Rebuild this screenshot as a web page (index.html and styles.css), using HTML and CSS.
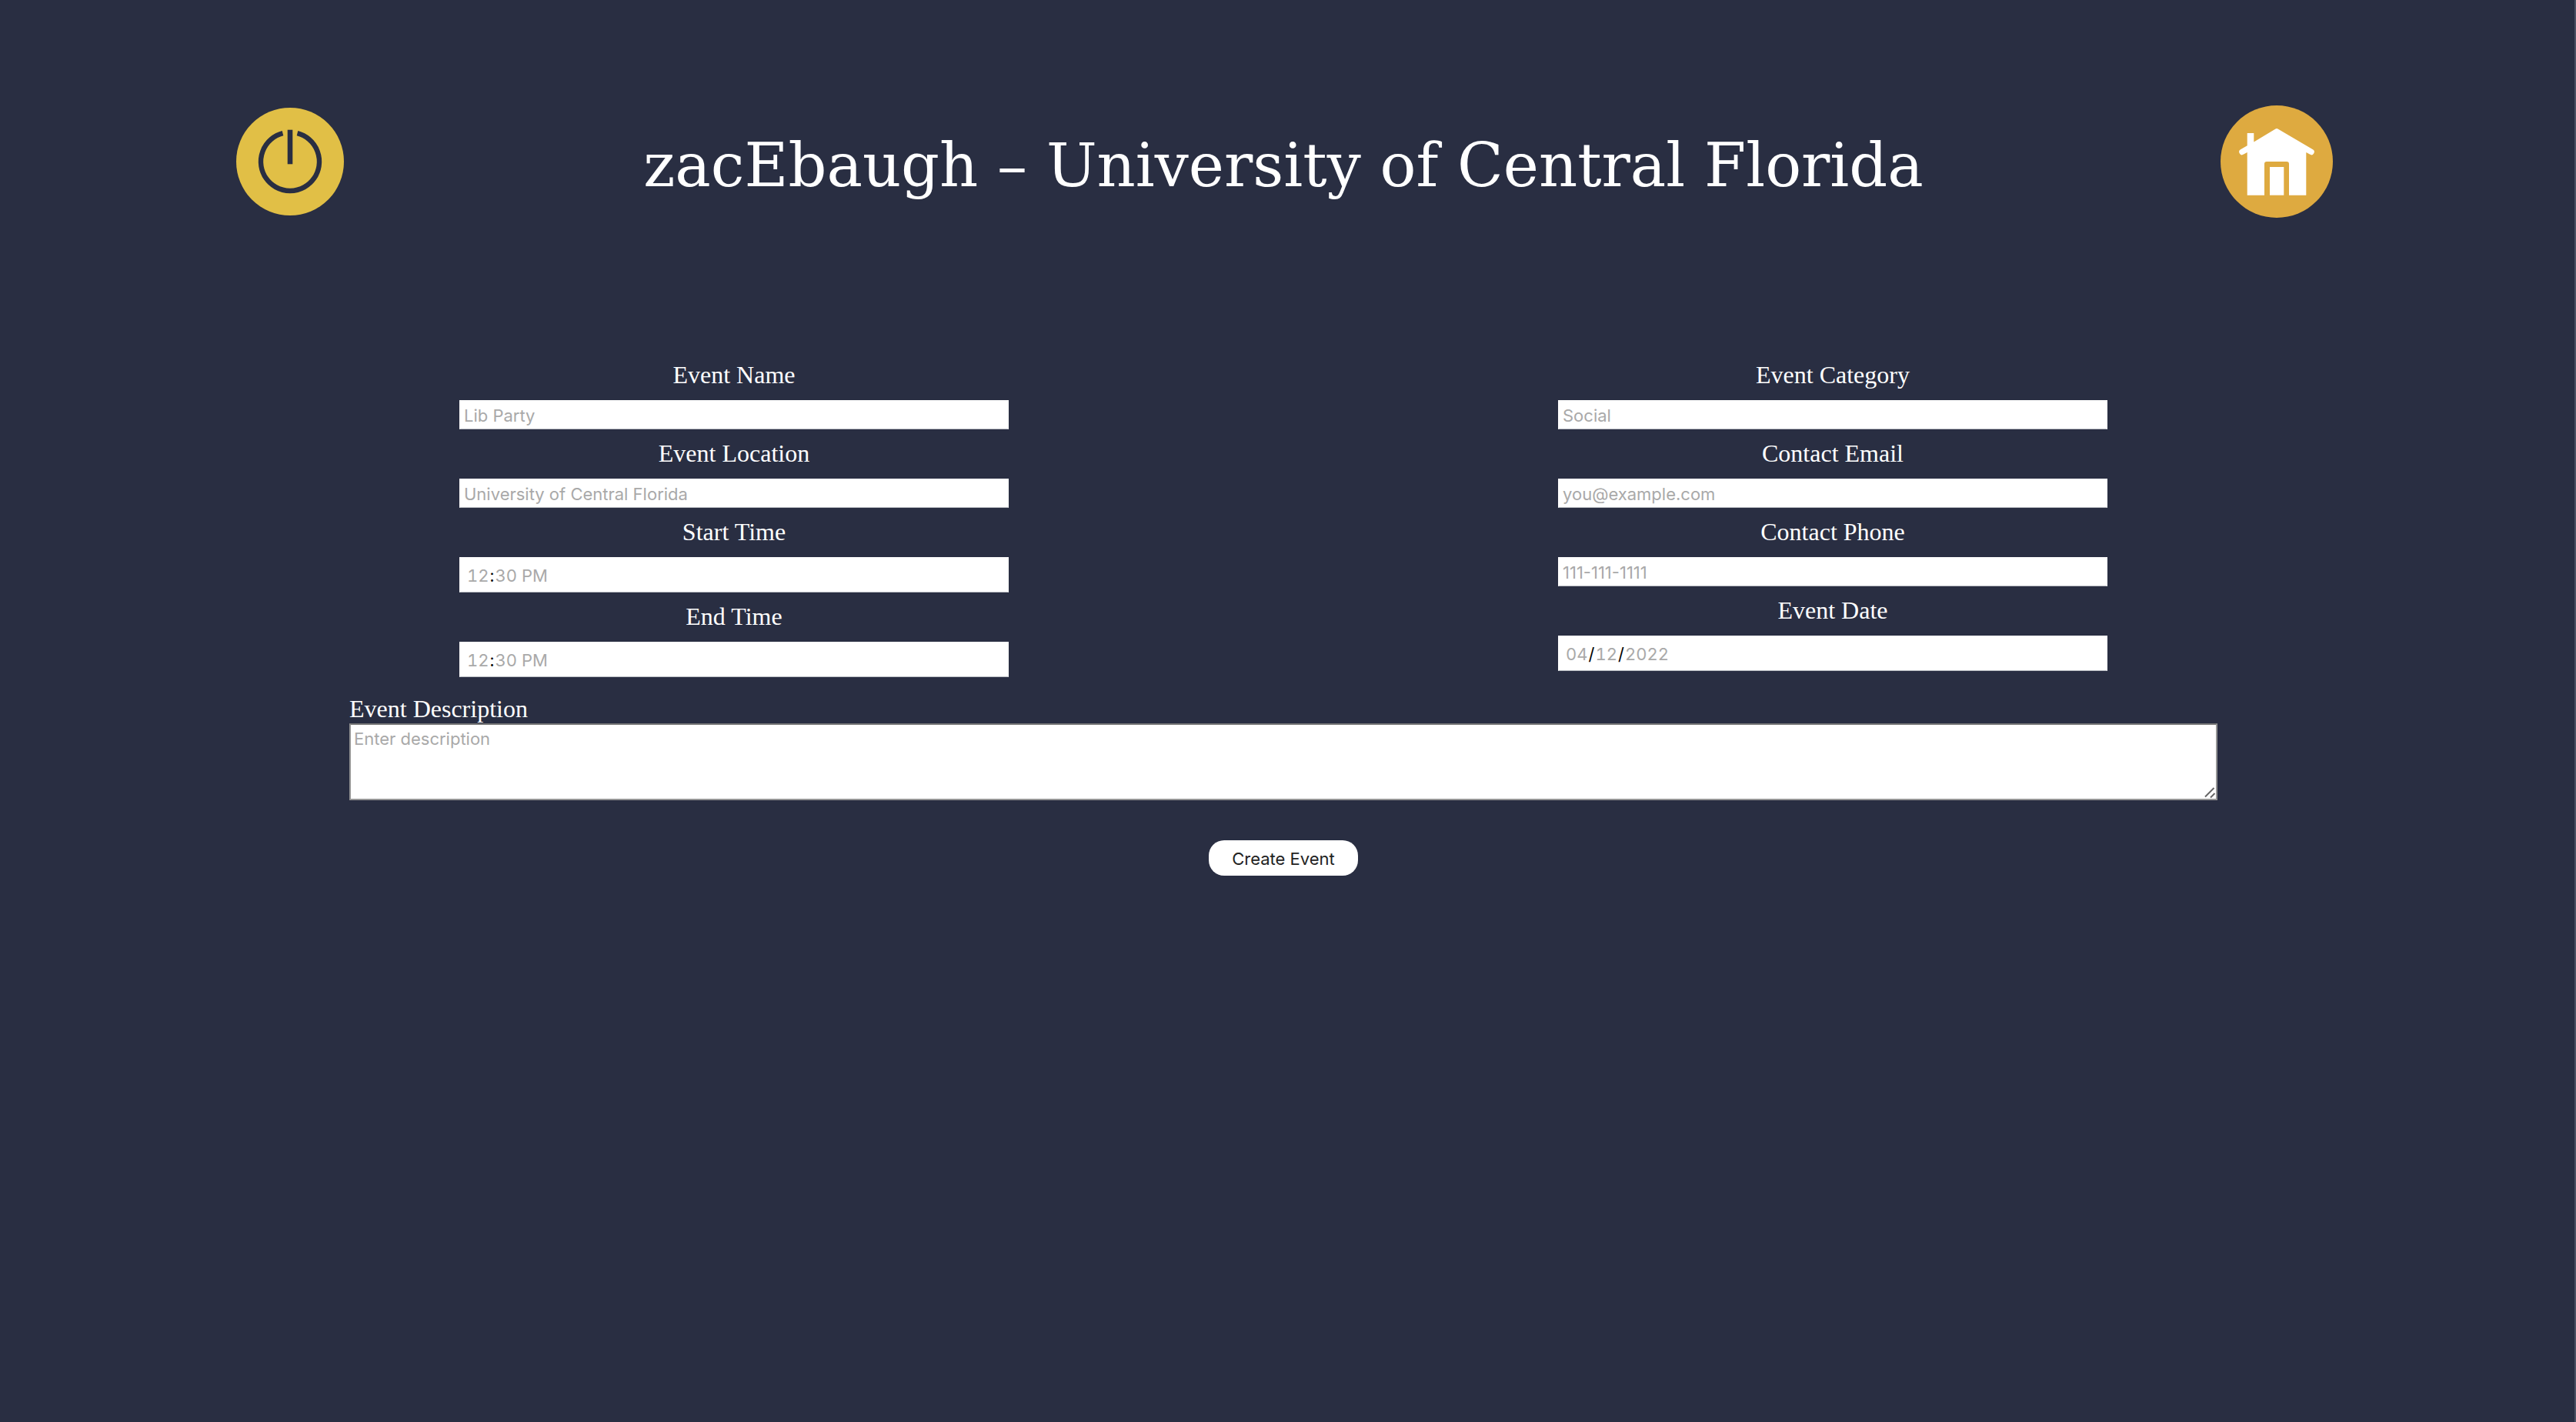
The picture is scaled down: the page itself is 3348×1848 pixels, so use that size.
FILE: index.html
```html
<!DOCTYPE html>
<html lang="en-US">
<head>
  <meta charset="utf-8">
  <title>Create Event</title>
  <link rel="stylesheet" href="styles.css">
</head>
<body>
  <header class="header">
    <button class="icon-button" type="button" aria-label="Log out">
      <svg class="icon" viewBox="0 0 146 146" aria-hidden="true">
        <circle cx="73" cy="73" r="70" fill="#e1bf46"/>
        <path d="M63.5 36.2A38 38 0 1 0 82.5 36.2" fill="none" stroke="#292e42" stroke-width="6.4"/>
        <path d="M73 31.7V76.3" stroke="#292e42" stroke-width="6.6"/>
      </svg>
    </button>
    <h1 class="title">zacEbaugh – University of Central Florida</h1>
    <a class="icon-button" href="#" aria-label="Home">
      <svg class="icon" viewBox="0 0 146 146" aria-hidden="true">
        <circle cx="73" cy="73" r="73" fill="#deaa40"/>
        <path d="M34.7 36h8.6v11.5L71.5 30.4q1.5-.9 3 0L120 57.3a3.7 3.7 0 0 1-4 6.3l-4.7-2.7v55.8H89V76a3 3 0 0 0-3-3H60a3 3 0 0 0-3 3v40.7H34.7V60.9L30 63.6a3.7 3.7 0 0 1-4-6.3l8.7-5z" fill="#fff"/>
        <path d="M64 80h18.3v36.7H64z" fill="#fff"/>
      </svg>
    </a>
  </header>
  <form class="form">
    <div class="columns">
      <div class="column">
        <label class="label" for="name">Event Name</label>
        <input class="field" id="name" type="text" placeholder="Lib Party">
        <label class="label" for="location">Event Location</label>
        <input class="field" id="location" type="text" placeholder="University of Central Florida">
        <label class="label" for="start">Start Time</label>
        <input class="field field-picker" id="start" type="time" value="12:30">
        <label class="label" for="end">End Time</label>
        <input class="field field-picker" id="end" type="time" value="12:30">
      </div>
      <div class="column">
        <label class="label" for="category">Event Category</label>
        <input class="field" id="category" type="text" placeholder="Social">
        <label class="label" for="email">Contact Email</label>
        <input class="field" id="email" type="email" placeholder="you@example.com">
        <label class="label" for="phone">Contact Phone</label>
        <input class="field" id="phone" type="tel" placeholder="111-111-1111">
        <label class="label" for="date">Event Date</label>
        <input class="field field-picker" id="date" type="date" value="2022-04-12">
      </div>
    </div>
    <div class="description">
      <label class="label" for="description">Event Description</label>
      <textarea class="textarea" id="description" placeholder="Enter description"></textarea>
    </div>
    <button class="submit" type="submit">Create Event</button>
  </form>
</body>
</html>
```
FILE: styles.css
```css
* {
  box-sizing: border-box;
}

body {
  min-height: 100vh;
  margin: 0;
  padding: 137px 10px 0 0;
  border-right: 2px solid #4b5062;
  background: #292e42;
  color: #fff;
  font-family: "Liberation Serif", "Times New Roman", serif;
}

.header {
  display: flex;
  align-items: center;
  justify-content: space-between;
  max-width: 2728px;
  margin: 0 auto;
}

.icon-button {
  display: block;
  flex: none;
  width: 146px;
  padding: 0;
  border: 0;
  background: none;
  cursor: pointer;
}

.icon {
  display: block;
  width: 100%;
}

.title {
  margin: 0;
  padding-top: 10px;
  font-family: "DejaVu Serif", serif;
  font-size: 78px;
  font-weight: 400;
  line-height: 100px;
  text-align: center;
}

.form {
  display: flex;
  flex-direction: column;
  align-items: center;
  margin-top: 187px;
}

.columns {
  display: grid;
  grid-template-columns: 1fr 1fr;
  width: 100%;
  max-width: 2856px;
}

.column {
  display: flex;
  flex-direction: column;
  align-items: center;
  gap: 14px;
}

.label {
  padding-bottom: 2px;
  font-size: 32px;
  line-height: 34px;
}

.field {
  width: 50%;
  height: 38px;
  margin: 0;
  padding: 3px 5px 1px;
  border: 1px solid #fff;
  border-bottom-color: #b9bcc2;
  border-radius: 0;
  background: #fff;
  color: #000;
  font-family: Inter, sans-serif;
  font-size: 22px;
}

.field::placeholder,
.textarea::placeholder {
  color: #a9a9a9;
  opacity: 1;
}

.field-picker {
  height: 46px;
  padding: 3px 8px 1px;
  font-variant-numeric: tabular-nums;
}

.field-picker::-webkit-calendar-picker-indicator {
  display: none;
}

.field-picker::-webkit-datetime-edit-hour-field,
.field-picker::-webkit-datetime-edit-minute-field,
.field-picker::-webkit-datetime-edit-ampm-field,
.field-picker::-webkit-datetime-edit-month-field,
.field-picker::-webkit-datetime-edit-day-field,
.field-picker::-webkit-datetime-edit-year-field {
  color: #a9a9a9;
}

.description {
  display: flex;
  flex-direction: column;
  width: 100%;
  max-width: 2428px;
  margin-top: 24px;
}

.textarea {
  width: 100%;
  height: 100px;
  margin: 0;
  padding: 5px 4px;
  border: 2px solid #959595;
  border-top-color: #767676;
  border-radius: 0;
  background: #fff;
  color: #000;
  font-family: Inter, sans-serif;
  font-size: 22px;
  line-height: 26px;
  resize: vertical;
}

.textarea::-webkit-resizer {
  background: url("data:image/svg+xml,%3Csvg xmlns='http://www.w3.org/2000/svg' width='15' height='15'%3E%3Cpath d='M1 12.5L12.5 1M8 13.5L13.5 8' stroke='%23666' stroke-width='2'/%3E%3C/svg%3E") no-repeat;
}

.submit {
  height: 46px;
  margin-top: 52px;
  padding: 2px 30px 0;
  border: 0;
  border-radius: 20px;
  background: #fff;
  color: #222;
  font-family: Inter, sans-serif;
  font-size: 22px;
}
```
